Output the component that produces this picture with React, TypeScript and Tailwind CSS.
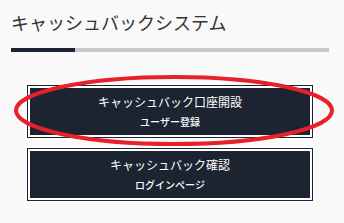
import React from 'react';

const buttons = [
  { title: 'キャッシュバック口座開設', sub: 'ユーザー登録' },
  { title: 'キャッシュバック確認', sub: 'ログインページ' },
];

const App: React.FC = () => {
  return (
    <div
      className="relative w-[344px] h-[223px] bg-[#f9f9f9] overflow-hidden"
      style={{ fontFamily: '"Noto Sans CJK JP", "Noto Sans", sans-serif' }}
    >
      <div className="px-[11px] pt-[9px]">
        <h1 className="text-[18px] leading-[27px] text-[#333333] font-normal">キャッシュバックシステム</h1>
        <div className="mt-[12px] flex h-[4px] w-[318px]">
          <div className="w-[64px] bg-[#1b2430]"></div>
          <div className="flex-1 bg-[#c8c8c8]"></div>
        </div>
      </div>

      <div className="mt-[31px] ml-[25px] w-[290px] flex flex-col gap-[6px]">
        {buttons.map((b, i) => (
          <div key={i} className="bg-white p-[2px]">
            <div className="border border-[#1b2430] p-[2px]">
              <div className="bg-[#1b2430] h-[47px] flex flex-col items-center justify-center text-white">
                <span className="text-[12px] leading-[16px]">{b.title}</span>
                <span className="text-[10px] leading-[14px] mt-[5px] font-medium">{b.sub}</span>
              </div>
            </div>
          </div>
        ))}
      </div>

      {/* red marker ellipse */}
      <svg className="absolute left-0 top-0 pointer-events-none" width="344" height="223">
        <ellipse cx="174" cy="110.5" rx="158" ry="33.5" fill="none" stroke="#e8202a" strokeWidth="4" />
      </svg>
    </div>
  );
};

export default App;
